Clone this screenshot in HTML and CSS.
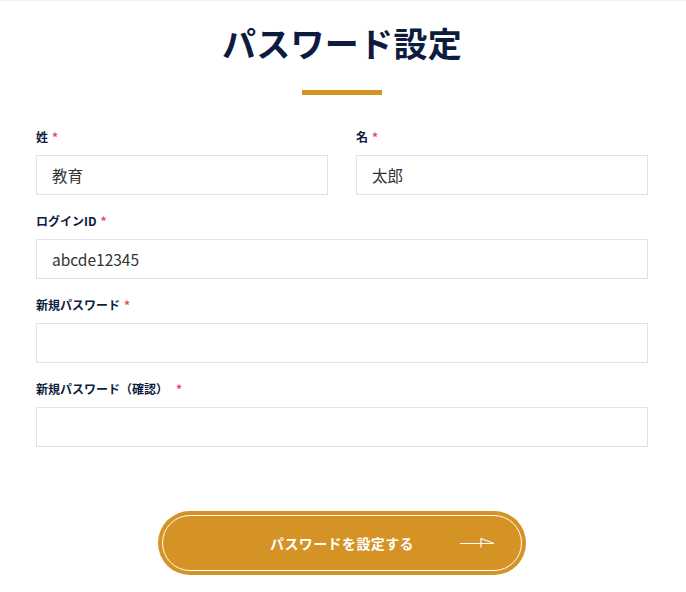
FILE: index.html
```html
<!DOCTYPE html>
<html lang="ja">
<head>
<meta charset="utf-8">
<title>パスワード設定</title>
<link rel="stylesheet" href="styles.css">
</head>
<body>
<main class="page">
  <h1 class="title">パスワード設定</h1>
  <div class="title-bar"></div>
  <form class="form">
    <div class="row">
      <div class="field">
        <label class="label">姓<span class="req">*</span></label>
        <div class="input">教育</div>
      </div>
      <div class="field">
        <label class="label">名<span class="req">*</span></label>
        <div class="input">太郎</div>
      </div>
    </div>
    <div class="field">
      <label class="label">ログインID<span class="req">*</span></label>
      <div class="input">abcde12345</div>
    </div>
    <div class="field">
      <label class="label">新規パスワード<span class="req">*</span></label>
      <div class="input"></div>
    </div>
    <div class="field">
      <label class="label">新規パスワード（確認）<span class="req req-wide">*</span></label>
      <div class="input"></div>
    </div>
    <div class="actions">
      <button type="button" class="submit">
        <span class="submit-inner">
          <span class="submit-text">パスワードを設定する</span>
          <svg class="arrow" width="35" height="12" viewBox="0 0 35 12" fill="none" stroke="#fff" stroke-width="1.2">
            <path d="M0 6.5H34L21 1.5V10.5"/>
          </svg>
        </span>
      </button>
    </div>
  </form>
</main>
</body>
</html>
```
FILE: styles.css
```css
* { box-sizing: border-box; }
html, body { margin: 0; padding: 0; background: #fff; }
body {
  font-family: "Noto Sans CJK JP", "Noto Sans", sans-serif;
  color: #0d1b3e;
  border-top: 1px solid #f0f0f2;
}
.page {
  width: 612px;
  margin: 0 0 0 36px;
  padding-top: 12px;
}
.title {
  margin: 0;
  text-align: center;
  font-size: 34px;
  font-weight: 700;
  line-height: 60px;
  letter-spacing: 0.3px;
  color: #0d1b3e;
}
.title-bar {
  width: 80px;
  height: 5px;
  background: #d59325;
  margin: 17px auto 0;
}
.form {
  margin-top: 34px;
  display: flex;
  flex-direction: column;
  gap: 18px;
}
.row {
  display: grid;
  grid-template-columns: 1fr 1fr;
  column-gap: 28px;
}
.field {
  display: flex;
  flex-direction: column;
}
.label {
  font-size: 12px;
  font-weight: 700;
  line-height: 16px;
  margin-bottom: 10px;
  color: #0d1b3e;
}
.req {
  color: #e24a5e;
  margin-left: 4px;
  font-weight: 700;
}
.req-wide { margin-left: 8px; }
.input {
  height: 40px;
  border: 1px solid #e2e2ec;
  padding: 0 15px;
  font-size: 15.5px;
  line-height: 38px;
  color: #333;
}
.actions {
  display: flex;
  justify-content: center;
  margin-top: 46px;
}
.submit {
  width: 368px;
  height: 64px;
  border: none;
  border-radius: 32px;
  background: #d59325;
  padding: 4px;
  cursor: pointer;
  font-family: inherit;
}
.submit-inner {
  position: relative;
  display: flex;
  align-items: center;
  justify-content: center;
  height: 100%;
  border: 1.5px solid #fff;
  border-radius: 28px;
}
.submit-text {
  color: #fff;
  font-size: 14px;
  font-weight: 700;
  letter-spacing: 0.4px;
}
.arrow {
  position: absolute;
  right: 26.5px;
  top: 50%;
  margin-top: -6px;
}
```
